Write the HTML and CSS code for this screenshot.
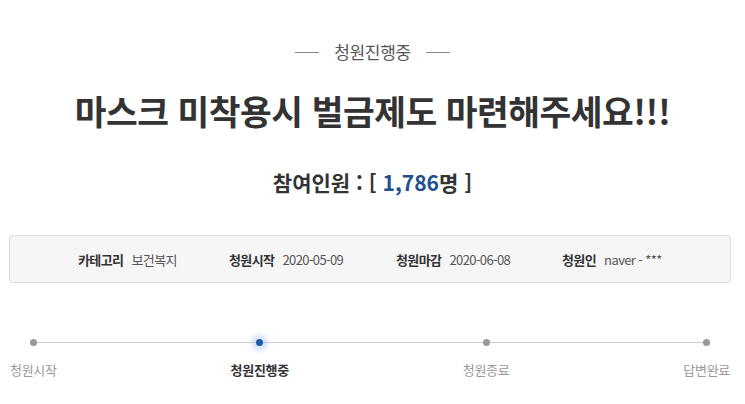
FILE: index.html
```html
<!DOCTYPE html>
<html lang="ko">
<head>
<meta charset="utf-8">
<link rel="stylesheet" href="styles.css">
</head>
<body>
<div class="page">
  <div class="status"><span class="dash"></span><span class="status-text">청원진행중</span><span class="dash"></span></div>
  <h1 class="title">마스크 미착용시 벌금제도 마련해주세요!!!</h1>
  <div class="count">참여인원 : [ <span class="num">1,786</span>명 ]</div>
  <div class="info">
    <div class="item"><b>카테고리</b><span>보건복지</span></div>
    <div class="item"><b>청원시작</b><span>2020-05-09</span></div>
    <div class="item"><b>청원마감</b><span>2020-06-08</span></div>
    <div class="item"><b>청원인</b><span>naver - ***</span></div>
  </div>
  <div class="steps">
    <div class="step"><i class="dot"></i><span>청원시작</span></div>
    <div class="step active"><i class="dot"></i><span>청원진행중</span></div>
    <div class="step"><i class="dot"></i><span>청원종료</span></div>
    <div class="step"><i class="dot"></i><span>답변완료</span></div>
  </div>
</div>
</body>
</html>
```
FILE: styles.css
```css
html, body { margin: 0; padding: 0; background: #fff; }
body { font-family: "Noto Sans CJK KR", "Noto Sans", sans-serif; color: #333; }
.page { width: 745px; height: 404px; overflow: hidden; }
.status { display: flex; justify-content: center; align-items: center; gap: 15px; padding-top: 40px; height: 24px; }
.dash { width: 24px; height: 1px; background: #888; }
.status-text { font-size: 17px; color: #555; line-height: 24px; letter-spacing: -0.3px; }
.title { margin: 21px 0 0; text-align: center; font-size: 34.5px; font-weight: 700; line-height: 50px; color: #333; letter-spacing: -0.5px; }
.count { margin-top: 33px; text-align: center; font-size: 21px; font-weight: 700; line-height: 28px; color: #333; }
.count .num { color: #1e4f8f; }
.info { margin: 39px 14px 0 9px; height: 46px; border: 1px solid #ddd; border-radius: 3px; background: #f6f6f6; display: flex; align-items: center; padding-left: 68px; }
.item { font-size: 13px; color: #555; display: flex; gap: 8px; letter-spacing: -0.6px; }
.item b { color: #333; font-weight: 700; }
.item:nth-child(1) { width: 151px; }
.item:nth-child(2) { width: 167px; }
.item:nth-child(3) { width: 166px; }
.steps { position: relative; display: flex; justify-content: space-between; margin: 55px 15px 0 10px; }
.steps::before { content: ""; position: absolute; left: 23px; right: 23px; top: 4px; height: 1px; background: #ccc; }
.step { display: flex; flex-direction: column; align-items: center; gap: 15px; position: relative; }
.dot { width: 7px; height: 7px; border-radius: 50%; background: #999; margin-top: 1px; }
.step span { font-size: 13px; color: #999; line-height: 18px; letter-spacing: -0.3px; }
.step.active .dot { background: #1e58a8; box-shadow: 0 0 0 4px rgba(120, 170, 240, 0.18), 0 0 0 7px rgba(120, 170, 240, 0.08); }
.step.active span { color: #333; font-weight: 700; }
```
